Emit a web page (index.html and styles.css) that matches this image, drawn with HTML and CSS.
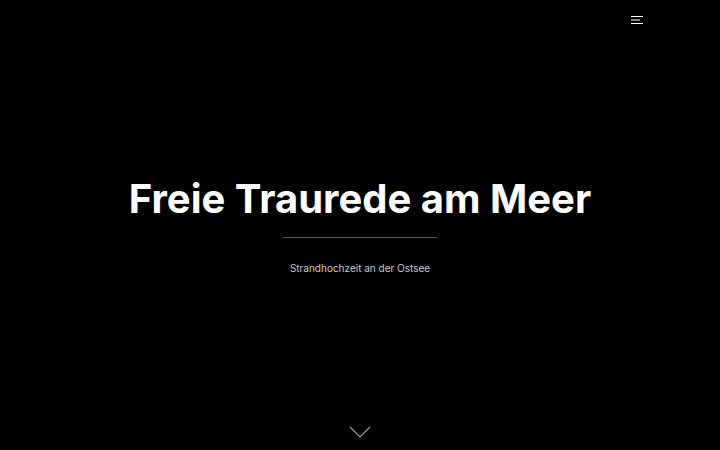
FILE: index.html
```html
<!DOCTYPE html>
<html lang="de">
<head>
<meta charset="utf-8">
<title>Freie Traurede am Meer</title>
<link rel="stylesheet" href="styles.css">
</head>
<body>
<div class="hero">
  <header class="topbar">
    <button class="menu" aria-label="Menü">
      <svg width="12" height="9" viewBox="0 0 12 9" fill="none" stroke="#fff" stroke-width="1">
        <path d="M0 0.5H12M0 4H9M0 7.5H12"/>
      </svg>
    </button>
  </header>
  <main class="center">
    <h1 class="title">Freie Traurede am Meer</h1>
    <div class="rule"></div>
    <p class="subtitle">Strandhochzeit an der Ostsee</p>
  </main>
  <footer class="scroll">
    <svg width="22" height="12" viewBox="0 0 22 12" fill="none" stroke="#9a9a9a" stroke-width="1.2">
      <path d="M1 1L11 11L21 1"/>
    </svg>
  </footer>
</div>
</body>
</html>
```

FILE: styles.css
```css
html, body {
  margin: 0;
  padding: 0;
  background: #000;
}
body {
  font-family: Inter, "Noto Sans", sans-serif;
  color: #fff;
}
.hero {
  height: 450px;
  display: flex;
  flex-direction: column;
  overflow: hidden;
}
.topbar {
  display: flex;
  justify-content: flex-end;
  padding: 16px 77px 0 0;
  height: 19px;
}
.menu {
  background: none;
  border: 0;
  padding: 0;
  margin: 0;
  width: 12px;
  height: 9px;
  display: block;
}
.menu svg { display: block; }
.center {
  flex: 1;
  display: flex;
  flex-direction: column;
  align-items: center;
  padding-top: 140px;
}
.title {
  margin: 0;
  font-size: 40px;
  font-weight: 700;
  line-height: 48px;
}
.rule {
  width: 154px;
  height: 1px;
  background: #5a5a5a;
  margin-top: 14px;
}
.subtitle {
  margin: 22px 0 0;
  font-size: 10px;
  line-height: 16px;
  color: #c8c8c8;
}
.scroll {
  display: flex;
  justify-content: center;
  padding-bottom: 12px;
}
.scroll svg { display: block; }
```
